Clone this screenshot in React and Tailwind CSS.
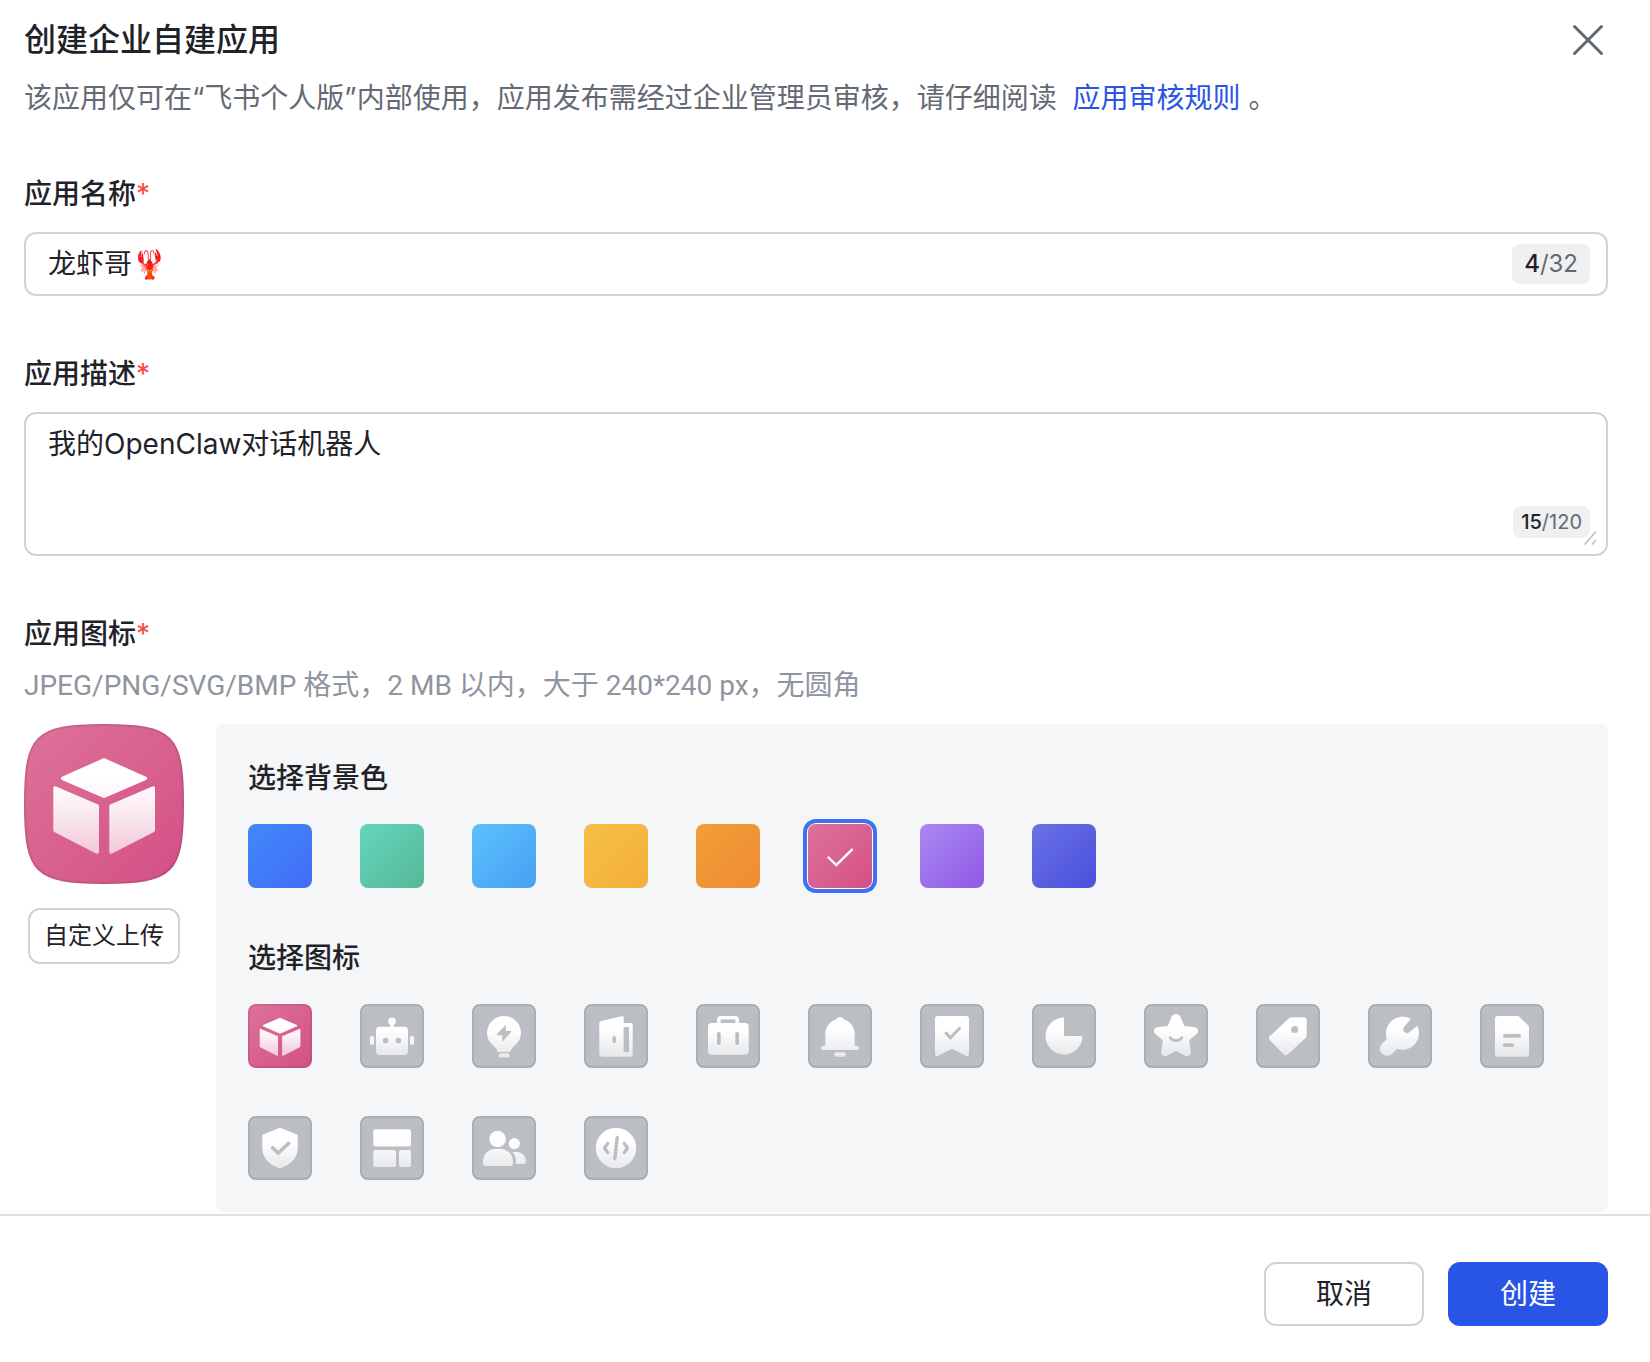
import React, { useState } from 'react';

const NAME_MAX = 32;
const DESC_MAX = 120;

const COLORS = [
  { id: 'blue', label: '蓝色', from: '#4189fa', to: '#426cf6' },
  { id: 'green', label: '绿色', from: '#64d6bd', to: '#56b797' },
  { id: 'sky', label: '天蓝色', from: '#5bc1fb', to: '#489ff5' },
  { id: 'yellow', label: '黄色', from: '#f5c043', to: '#f4ae3c' },
  { id: 'orange', label: '橙色', from: '#f19e39', to: '#ef8c32' },
  { id: 'pink', label: '粉色', from: '#dd7299', to: '#d45085' },
  { id: 'purple', label: '紫色', from: '#a987f2', to: '#915ae6' },
  { id: 'indigo', label: '靛蓝色', from: '#6a71e5', to: '#4a50dc' },
];

const FADE = 'url(#glyph-fade)';

// Glyphs are drawn on a 64x64 grid, holes use the tile colour (currentColor)
const ICONS = [
  { id: 'cube', label: '立方体' },
  {
    id: 'robot',
    label: '机器人',
    art: (
      <>
        <circle cx="32" cy="17.2" r="3.8" />
        <rect x="30.2" y="18" width="3.6" height="6" />
        <rect x="16" y="22.8" width="32" height="28.2" rx="4" />
        <rect x="10" y="32" width="4" height="9" rx="1.8" />
        <rect x="50" y="32" width="4" height="9" rx="1.8" />
        <circle cx="25.6" cy="36.6" r="2.8" fill="currentColor" />
        <circle cx="38.4" cy="36.6" r="2.8" fill="currentColor" />
      </>
    ),
  },
  {
    id: 'bulb',
    label: '灯泡',
    art: (
      <>
        <path d="M32 12a17 17 0 0 1 17 17c0 5-2.3 9-5.6 12-2.2 2-3.6 2.8-4.4 5.4-.3 1-.9 1.6-2 1.6H27c-1.1 0-1.7-.6-2-1.6-.8-2.6-2.2-3.4-4.4-5.4C17.3 38 15 34 15 29a17 17 0 0 1 17-17Z" />
        <rect x="26.6" y="49.3" width="11" height="4.2" rx="2" />
        <path d="M33.8 20.8v6.2h4.8c.7 0 .9.7.4 1.2l-8.7 9.8v-6.7h-4.8c-.7 0-.9-.7-.4-1.2Z" fill="currentColor" />
      </>
    ),
  },
  {
    id: 'door',
    label: '门',
    art: (
      <>
        <path d="M15.3 19.3c0-1.2.7-2 1.9-2.3L38 12.3c1-.2 1.7.3 1.7 1.2V19h6.8c1.3 0 2.2.9 2.2 2.2v29c0 1.5-1 2.5-2.5 2.5H18.3c-1.8 0-3-1.2-3-3Z" />
        <rect x="39.6" y="23" width="5.4" height="25" fill="currentColor" />
        <rect x="28.4" y="32" width="3.5" height="7" rx="1.6" fill="currentColor" />
      </>
    ),
  },
  {
    id: 'briefcase',
    label: '公文包',
    art: (
      <>
        <path d="M22.8 20v-4c0-1.4.8-2.2 2.2-2.2h14c1.4 0 2.2.8 2.2 2.2v4" fill="none" stroke={FADE} strokeWidth="3.5" />
        <rect x="12" y="19" width="40.7" height="31.7" rx="3.6" />
        <rect x="21" y="28" width="3.7" height="13" rx="1.7" fill="currentColor" />
        <rect x="39.3" y="28" width="3.7" height="13" rx="1.7" fill="currentColor" />
      </>
    ),
  },
  {
    id: 'bell',
    label: '铃铛',
    art: (
      <>
        <path d="M28.2 15.4c.6-1.5 2-2.4 3.8-2.4s3.2.9 3.8 2.4c6.4 1.8 10.9 7.6 10.9 14.6v12h2.3c1.2 0 1.9.8 1.9 2s-.7 2-1.9 2H15c-1.2 0-1.9-.8-1.9-2s.7-2 1.9-2h2.3V30c0-7 4.5-12.8 10.9-14.6Z" />
        <rect x="26" y="48.3" width="12" height="4.4" rx="2.2" />
      </>
    ),
  },
  {
    id: 'bookmark',
    label: '书签',
    art: (
      <>
        <path d="M15 15c0-1.9 1.1-3 3-3h28c1.9 0 3 1.1 3 3v34.8c0 2-1.7 2.9-3.4 2L33.3 45.5c-.9-.5-1.7-.5-2.6 0l-12.3 6.3c-1.7.9-3.4 0-3.4-2Z" />
        <path d="m26.2 29.3 4.3 4.5 8.9-9.3" fill="none" stroke="currentColor" strokeWidth="3.2" strokeLinecap="round" />
      </>
    ),
  },
  {
    id: 'pie',
    label: '饼图',
    art: <path d="M31 13.5c.7 0 1 .4 1 1V31c0 .7.3 1 1 1h16.500c.7 0 1 .4 1 1A18.5 18.5 0 1 1 31 13.5Z" />,
  },
  {
    id: 'star',
    label: '星星',
    art: (
      <>
        <path d="M32 10c2.2 0 3.7 1.3 4.7 3.5l3 7.2c.4 1 1.1 1.5 2.2 1.6l8 .8c4.3.5 5.5 4.7 2.3 7.4l-6.1 5c-.8.7-1.1 1.5-.9 2.5l1.6 8.6c.7 4.2-2.3 6.9-6.3 4.9l-7-3.9c-1-.6-2-.6-3 0l-7 3.9c-4 2-7-.7-6.3-4.9l1.6-8.6c.2-1-.1-1.8-.9-2.5l-6.1-5c-3.2-2.7-2-6.9 2.3-7.4l8-.8c1.1-.1 1.8-.6 2.2-1.600l3-7.2C28.3 11.3 29.8 10 32 10Z" />
        <path d="M26 33.6c3 4 9 4 12 0" fill="none" stroke="currentColor" strokeWidth="2.6" strokeLinecap="round" />
      </>
    ),
  },
  {
    id: 'tag',
    label: '标签',
    art: (
      <>
        <path d="M33 14.3c.8-.7 1.5-1 2.6-1h12.6c1.6 0 2.5.9 2.5 2.5v15.6c0 1-.3 1.8-1 2.5L32 50.2c-1.5 1.4-2.9 1.4-4.3 0L13.8 36.1c-1.3-1.3-1.2-2.9.1-4.1Z" />
        <circle cx="38.7" cy="25.6" r="3.5" fill="currentColor" />
      </>
    ),
  },
  {
    id: 'wrench',
    label: '扳手',
    art: (
      <>
        <path d="M18.5 33.5a16.5 16.5 0 1 1 11.3 11.6c-.8-.2-1.3.1-1.9.7l-3.6 4a7.2 7.2 0 0 1-10.2-10.2l3.9-3.7c.7-.8.8-1.5.5-2.4Z" />
        <path d="M36.5 22.6 42.5 15 52 10l-1 10.5-9.5 7.5a3.6 3.6 0 0 1-5-5.4Z" fill="currentColor" />
      </>
    ),
  },
  {
    id: 'doc',
    label: '文档',
    art: (
      <>
        <path d="M15 15c0-1.9 1.1-3 3-3h19.3c.9 0 1.6.3 2.2.9l8.6 8.4c.6.6.9 1.3.9 2.2v26.2c0 1.9-1.1 3-3 3H18c-1.9 0-3-1.1-3-3Z" />
        <rect x="23" y="30" width="18" height="3.8" rx="1.9" fill="currentColor" />
        <rect x="23" y="39.3" width="11" height="3.8" rx="1.9" fill="currentColor" />
      </>
    ),
  },
  {
    id: 'shield',
    label: '盾牌',
    art: (
      <>
        <path d="M30.7 12.3c.9-.4 1.7-.4 2.6 0l15 6c1 .4 1.4 1.1 1.4 2.1V32c0 10-7.2 16.7-16.4 20-.9.3-1.7.3-2.6 0C21.5 48.7 14.3 42 14.3 32V20.4c0-1 .4-1.7 1.4-2.1Z" />
        <path d="m24.5 31.7 5.7 5.4L40.7 27.3" fill="none" stroke="currentColor" strokeWidth="3.6" strokeLinecap="round" />
      </>
    ),
  },
  {
    id: 'layout',
    label: '布局',
    art: (
      <>
        <rect x="13.3" y="13.3" width="37.7" height="17.3" rx="2" />
        <rect x="13.3" y="34" width="22.7" height="17" rx="2" />
        <rect x="39" y="34" width="12" height="17" rx="2" />
      </>
    ),
  },
  {
    id: 'people',
    label: '成员',
    art: (
      <>
        <circle cx="25.6" cy="23" r="8.3" />
        <path d="M23 33h5.3C35.5 33 41 38.8 41 45.5V47c0 1.9-1.1 3-3 3H14c-1.9 0-3-1.1-3-3v-1.5C11 38.8 16 33 23 33Z" />
        <circle cx="42.3" cy="27.6" r="5.6" />
        <path d="M40.5 36H45c5 0 8.7 3.6 8.7 8.5v1.3c0 1.4-.8 2.2-2.2 2.2H44c.3-4.6-.6-8.9-3.5-12Z" />
      </>
    ),
  },
  {
    id: 'code',
    label: '代码',
    art: (
      <>
        <circle cx="32" cy="32" r="20.2" />
        <path d="m23.7 27.4-3.2 4.6 3.2 4.6M40.3 27.4l3.2 4.6-3.2 4.6M33.2 21.6 30.8 42.6" fill="none" stroke="currentColor" strokeWidth="3.4" strokeLinecap="round" strokeLinejoin="round" />
      </>
    ),
  },
];

function GlyphDefs() {
  return (
    <svg className="absolute h-0 w-0" aria-hidden="true">
      <defs>
        <linearGradient id="glyph-fade" gradientUnits="userSpaceOnUse" x1="0" y1="10" x2="0" y2="54">
          <stop offset="0.35" stopColor="#fff" />
          <stop offset="1" stopColor="#fff" stopOpacity="0.62" />
        </linearGradient>
        <linearGradient id="cube-fade" gradientUnits="userSpaceOnUse" x1="0" y1="34" x2="0" y2="132">
          <stop offset="0.2" stopColor="#fff" />
          <stop offset="0.5" stopColor="#fff" stopOpacity="0.9" />
          <stop offset="1" stopColor="#fff" stopOpacity="0.65" />
        </linearGradient>
      </defs>
    </svg>
  );
}

function CubeArt() {
  return (
    <g fill="url(#cube-fade)">
      <path d="M78.5 34.7c1-.5 2-.5 3 0l40.5 18c1.6.8 1.6 2.4 0 3.2L81.5 73.6c-1 .5-2 .5-3 0L38 55.9c-1.6-.8-1.6-2.4 0-3.2Z" />
      <path d="M29.3 64.3c0-1.7 1.2-2.4 2.7-1.7l41.5 17.6c1 .4 1.5 1.1 1.5 2.2v45.3c0 1.8-1.3 2.6-2.9 1.7L30.8 108.3c-1-.6-1.5-1.4-1.5-2.6Z" />
      <path d="M131 64.3c0-1.7-1.2-2.4-2.7-1.7L86.8 80.2c-1 .4-1.5 1.1-1.5 2.2v45.3c0 1.8 1.3 2.6 2.9 1.7l41.3-21.1c1-.6 1.5-1.4 1.5-2.6Z" />
    </g>
  );
}

function Glyph({ icon }) {
  if (icon.id === 'cube') {
    return (
      <svg viewBox="0 0 160 160" className="block h-16 w-16" aria-hidden="true">
        <CubeArt />
      </svg>
    );
  }
  return (
    <svg viewBox="0 0 64 64" className="block h-16 w-16" fill={FADE} aria-hidden="true">
      {icon.art}
    </svg>
  );
}

function AppIcon({ color, icon }) {
  const squircle = 'M1 80C1 11 11 1 80 1S159 11 159 80 149 159 80 159 1 149 1 80Z';
  return (
    <svg viewBox="0 0 160 160" className="block h-40 w-40" style={{ color: color.to }} aria-hidden="true">
      <defs>
        <linearGradient id="app-bg" x1="0" y1="0" x2="1" y2="1">
          <stop offset="0" stopColor={color.from} />
          <stop offset="1" stopColor={color.to} />
        </linearGradient>
      </defs>
      <path d={squircle} fill="url(#app-bg)" stroke="url(#app-bg)" strokeWidth="2" />
      <path d={squircle} fill="none" stroke="#1f2329" strokeOpacity="0.12" strokeWidth="2" />
      {icon.id === 'cube' ? <CubeArt /> : <g transform="scale(2.5)" fill={FADE}>{icon.art}</g>}
    </svg>
  );
}

function Required() {
  return <span className="font-normal text-[#f54a45]">*</span>;
}

export default function App() {
  const [name, setName] = useState('龙虾哥🦞');
  const [desc, setDesc] = useState('我的OpenClaw对话机器人');
  const [colorId, setColorId] = useState('pink');
  const [iconId, setIconId] = useState('cube');

  const color = COLORS.find((c) => c.id === colorId);
  const icon = ICONS.find((i) => i.id === iconId);
  const gradient = `linear-gradient(135deg, ${color.from}, ${color.to})`;

  return (
    <div className="flex min-h-screen flex-col bg-white font-['Inter','Noto_Sans_CJK_SC',sans-serif] text-[28px] leading-11 text-[#1f2329]">
      <GlyphDefs />
      <main className="pt-4 pr-[42px] pb-0.5 pl-6">
        <header className="mb-13">
          <div className="mb-3 flex items-center justify-between">
            <h1 className="text-[32px] leading-12 font-medium">创建企业自建应用</h1>
            <button type="button" aria-label="关闭" className="text-[#646a73]">
              <svg viewBox="0 0 40 40" className="block h-10 w-10" fill="none" stroke="currentColor" strokeWidth="3" strokeLinecap="round">
                <path d="m6.5 6.5 27 27M33.5 6.5l-27 27" />
              </svg>
            </button>
          </div>
          <p className="text-[#646a73]">
            该应用仅可在“飞书个人版”内部使用，应用发布需经过企业管理员审核，请仔细阅读{' '}
            <a href="#rules" className="mx-2 text-[#2955e7]">应用审核规则</a>
            。
          </p>
        </header>

        <div className="mb-14">
          <label htmlFor="app-name" className="mb-4 block font-medium">应用名称<Required /></label>
          <div className="flex h-16 items-center rounded-xl border-2 border-[#d0d3d6] pr-4 pl-[22px]">
            <input
              id="app-name"
              type="text"
              value={name}
              maxLength={NAME_MAX}
              onChange={(e) => setName(e.target.value)}
              className="min-w-0 flex-1 bg-transparent outline-none"
            />
            <span className="rounded-lg bg-[#eff0f1] px-3 text-2xl leading-10 text-[#646a73]">
              <span className="font-medium text-[#1f2329]">{Array.from(name).length}</span>/{NAME_MAX}
            </span>
          </div>
        </div>

        <div className="mb-14">
          <label htmlFor="app-desc" className="mb-4 block font-medium">应用描述<Required /></label>
          <div className="relative">
            <textarea
              id="app-desc"
              value={desc}
              maxLength={DESC_MAX}
              onChange={(e) => setDesc(e.target.value)}
              className="block h-36 w-full resize-none rounded-xl border-2 border-[#d0d3d6] px-[22px] py-2 outline-none"
            />
            <span className="absolute right-[18px] bottom-[18px] rounded-lg bg-[#eff0f1] px-2 text-xl leading-8 text-[#646a73]">
              <span className="font-medium text-[#1f2329]">{desc.length}</span>/{DESC_MAX}
            </span>
            <svg viewBox="0 0 16 16" className="absolute right-2.5 bottom-2.5 h-4 w-4" fill="none" stroke="#bbbfc4" strokeWidth="1.5" strokeLinecap="round" aria-hidden="true">
              <path d="M3 14 13.5 2M10.5 14l3-3.5" />
            </svg>
          </div>
        </div>

        <section>
          <h2 className="mb-2 font-medium">应用图标<Required /></h2>
          <p className="mb-4 font-['Roboto','Noto_Sans_CJK_SC',sans-serif] text-[#8f959e]">
            JPEG/PNG/SVG/BMP 格式，2 MB 以内，大于 240*240 px，无圆角
          </p>
          <div className="flex gap-8">
            <div className="flex shrink-0 flex-col items-center gap-6">
              <AppIcon color={color} icon={icon} />
              <button type="button" className="h-14 rounded-xl border-2 border-[#d0d3d6] px-3.5 text-2xl">
                自定义上传
              </button>
            </div>

            <div className="flex-1 rounded-lg bg-[#f5f6f7] p-8">
              <h3 className="mb-6 font-medium">选择背景色</h3>
              <div className="mb-12 flex flex-wrap gap-12">
                {COLORS.map((c) => (
                  <button
                    key={c.id}
                    type="button"
                    aria-label={c.label}
                    aria-pressed={c.id === colorId}
                    onClick={() => setColorId(c.id)}
                    style={{ backgroundImage: `linear-gradient(135deg, ${c.from}, ${c.to})` }}
                    className={`h-16 w-16 rounded-lg ${c.id === colorId ? 'ring-4 ring-[#4270f0] ring-offset-1 ring-offset-white' : ''}`}
                  >
                    {c.id === colorId && (
                      <svg viewBox="0 0 64 64" className="block h-16 w-16" fill="none" stroke="#fff" strokeWidth="2.4" strokeLinecap="round" aria-hidden="true">
                        <path d="m20.5 33.5 7.7 7.5L44 25.7" />
                      </svg>
                    )}
                  </button>
                ))}
              </div>

              <h3 className="mb-6 font-medium">选择图标</h3>
              <div className="flex flex-wrap gap-12">
                {ICONS.map((i) => (
                  <button
                    key={i.id}
                    type="button"
                    aria-label={i.label}
                    aria-pressed={i.id === iconId}
                    onClick={() => setIconId(i.id)}
                    style={i.id === iconId ? { backgroundImage: gradient, color: color.to } : undefined}
                    className="h-16 w-16 rounded-lg bg-[#bbbfc4] text-[#bbbfc4] inset-ring-2 inset-ring-[#1f2329]/10"
                  >
                    <Glyph icon={i} />
                  </button>
                ))}
              </div>
            </div>
          </div>
        </section>
      </main>

      <footer className="flex flex-1 items-start justify-end gap-6 border-t-2 border-[#dee0e3] pt-[46px] pr-[42px] pb-9">
        <button type="button" className="h-16 w-40 rounded-xl border-2 border-[#d0d3d6] bg-white">取消</button>
        <button type="button" className="h-16 w-40 rounded-xl bg-[#2955e7] text-white">创建</button>
      </footer>
    </div>
  );
}
